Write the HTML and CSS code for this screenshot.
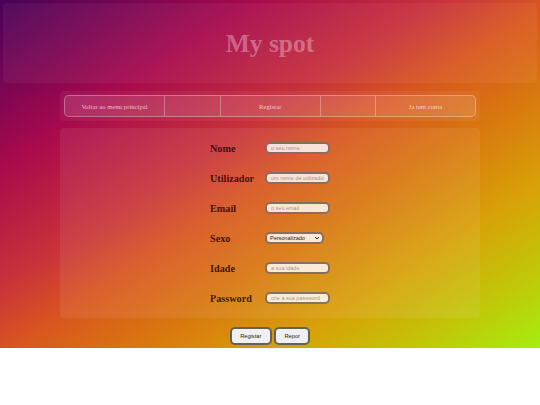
FILE: index.html
```html
<!DOCTYPE html>
<html lang="pt">

<head>
    <meta charset="UTF-8">
    <title>My spot</title>
    <link rel="stylesheet" href="styles.css">
</head>

<body>
    <div class="page">
        <header class="top">
            <h1>My spot</h1>
        </header>
        <nav class="nav">
            <ul class="nav_list">
                <li>Voltar ao menu principal</li>
                <li></li>
                <li>Registar</li>
                <li></li>
                <li>Ja tem conta</li>
            </ul>
        </nav>
        <form class="form">
            <div class="fields">
                <label for="nome">Nome</label>
                <input id="nome" type="text" placeholder="o seu nome">
                <label for="user">Utilizador</label>
                <input id="user" type="text" placeholder="um nome de utilizador">
                <label for="email">Email</label>
                <input id="email" type="text" placeholder="o seu email">
                <label for="sexo">Sexo</label>
                <select id="sexo">
                    <option>Personalizado</option>
                </select>
                <label for="idade">Idade</label>
                <input id="idade" type="text" placeholder="a sua idade">
                <label for="pass">Password</label>
                <input id="pass" type="text" placeholder="crie a sua password">
            </div>
        </form>
        <div class="buttons">
            <button type="button">Registar</button>
            <button type="button">Repor</button>
        </div>
    </div>
</body>

</html>
```

FILE: styles.css
```css
* {
    margin: 0;
    padding: 0;
    box-sizing: border-box;
}

html,
body {
    background-color: #fff;
}

.page {
    height: 348px;
    padding: 3px 3px 0;
    background: linear-gradient(to bottom right, #480058 0%, #a80a4c 24%, #c8323a 41%, #d8561f 51%, #d8780f 63%, #d8a008 76%, #c0c808 89%, #a5ee10 100%);
    font-family: "Liberation Serif", serif;
}

.top {
    display: flex;
    align-items: center;
    justify-content: center;
    height: 80px;
    padding-top: 2px;
    border-radius: 4px;
    background-color: rgba(255, 255, 255, 0.05);
}

.top h1 {
    font-size: 25.5px;
    color: rgba(255, 255, 255, 0.33);
}

.nav {
    width: 420px;
    height: 30px;
    margin: 8px auto 0;
    padding: 4px;
    border-radius: 4px;
    background-color: rgba(255, 255, 255, 0.05);
}

.nav_list {
    display: grid;
    grid-template-columns: 100px 56px 99.5px 55.5px 1fr;
    height: 22px;
    border: 1px solid rgba(255, 255, 255, 0.3);
    border-radius: 5px;
    background-color: rgba(255, 255, 255, 0.1);
    list-style: none;
}

.nav_list li {
    display: flex;
    align-items: center;
    justify-content: center;
    border-right: 1px solid rgba(255, 255, 255, 0.3);
    font-size: 6.7px;
    color: rgba(255, 255, 255, 0.7);
}

.nav_list li:last-child {
    border-right: 0;
}

.form {
    width: 420px;
    height: 190px;
    margin: 7px auto 0;
    padding-left: 150px;
    border-radius: 4px;
    background-color: rgba(255, 255, 255, 0.07);
}

.fields {
    display: grid;
    grid-template-columns: 55px 70px;
    grid-auto-rows: 30px;
    align-items: center;
    padding-top: 5px;
}

.fields label {
    font-size: 10.2px;
    font-weight: bold;
    color: rgba(40, 0, 0, 0.85);
}

.fields input,
.fields select {
    height: 12px;
    border: 2px solid rgba(60, 30, 15, 0.6);
    border-radius: 5px;
    background-color: rgba(255, 255, 255, 0.82);
    font-family: "Liberation Sans", sans-serif;
    font-size: 5.5px;
}

.fields input {
    width: 65px;
    padding: 0 4px;
}

.fields input::placeholder {
    color: rgba(80, 60, 50, 0.55);
}

.fields select {
    width: 59px;
    padding-left: 3px;
    appearance: none;
    background-image: url("data:image/svg+xml,%3Csvg xmlns='http://www.w3.org/2000/svg' width='6' height='4'%3E%3Cpath d='M1 1l2 2 2-2' fill='none' stroke='%23222' stroke-width='1'/%3E%3C/svg%3E");
    background-repeat: no-repeat;
    background-position: right 2px center;
    color: #222;
}

.buttons {
    display: flex;
    justify-content: center;
    gap: 2.5px;
    margin-top: 9px;
}

.buttons button {
    height: 18px;
    border: 2px solid rgba(40, 35, 20, 0.7);
    border-radius: 5px;
    background-color: #f0f0f0;
    font-family: "Liberation Sans", sans-serif;
    font-size: 5.7px;
    color: #222;
}

.buttons button:first-child {
    width: 42px;
}

.buttons button:last-child {
    width: 36px;
}
```
